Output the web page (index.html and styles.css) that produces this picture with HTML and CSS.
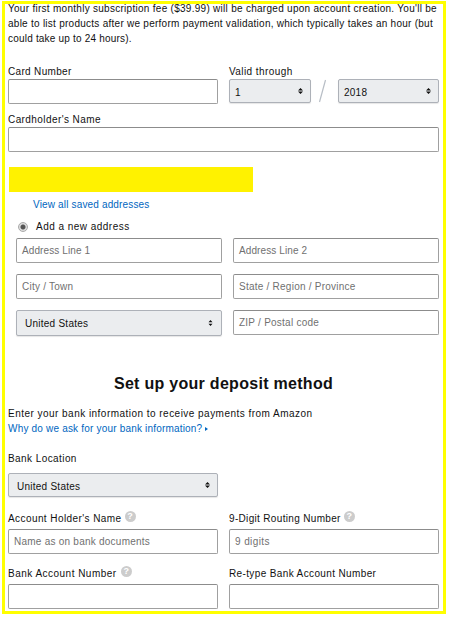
FILE: index.html
```html
<!DOCTYPE html>
<html lang="en">
<head>
<meta charset="utf-8">
<title>Set up your deposit method</title>
<link rel="stylesheet" href="styles.css">
</head>
<body>
<main class="frame">
  <p class="notice">Your first monthly subscription fee ($39.99) will be charged upon account creation. You'll be<br><span class="second">able to list products after we perform payment validation, which typically takes an hour (but</span><br><span class="third">could take up to 24 hours).</span></p>
  <section class="pair card">
    <div class="field"><label class="label snug">Card Number</label><div class="input"></div></div>
    <div class="field"><label class="label">Valid through</label>
      <div class="expiry">
        <div class="select month"><span>1</span><svg class="arrows" viewBox="0 0 5 6"><path d="M2.5 0 5 2.4H0zM0 3.6h5L2.5 6z"/></svg></div>
        <svg class="slash" viewBox="0 0 9 25"><path d="M7.5 1 1.5 23"/></svg>
        <div class="select year"><span>2018</span><svg class="arrows" viewBox="0 0 5 6"><path d="M2.5 0 5 2.4H0zM0 3.6h5L2.5 6z"/></svg></div>
      </div>
    </div>
  </section>
  <section class="field holder"><label class="label">Cardholder's Name</label><div class="input"></div></section>
  <div class="redacted"></div>
  <a class="saved">View all saved addresses</a>
  <div class="choice"><span class="radio"></span><span>Add a new address</span></div>
  <section class="address">
    <div class="input tight">Address Line 1</div><div class="input tight">Address Line 2</div>
    <div class="input">City / Town</div><div class="input">State / Region / Province</div>
    <div class="select country"><span>United States</span><svg class="arrows" viewBox="0 0 5 6"><path d="M2.5 0 4.5 2.2h-4zM.5 3.8h4L2.5 6z"/></svg></div><div class="input">ZIP / Postal code</div>
  </section>
  <h1 class="title">Set up your deposit method</h1>
  <p class="intro">Enter your bank information to receive payments from Amazon</p>
  <a class="why">Why do we ask for your bank information?<svg class="caret" viewBox="0 0 3 4"><path d="M0 0 3 2 0 4z"/></svg></a>
  <section class="location"><label class="label">Bank Location</label>
    <div class="select bank"><span>United States</span><svg class="arrows" viewBox="0 0 5 6"><path d="M2.5 0 5 2.4H0zM0 3.6h5L2.5 6z"/></svg></div>
  </section>
  <section class="pair account">
    <div class="field"><label class="label">Account Holder's Name<span class="help">?</span></label><div class="input">Name as on bank documents</div></div>
    <div class="field"><label class="label snug">9-Digit Routing Number<span class="help">?</span></label><div class="input digits">9 digits</div></div>
    <div class="field"><label class="label loose">Bank Account Number<span class="help">?</span></label><div class="input"></div></div>
    <div class="field"><label class="label retype">Re-type Bank Account Number</label><div class="input"></div></div>
  </section>
</main>
</body>
</html>
```
FILE: styles.css
```css
* { box-sizing: border-box; }
body { margin: 0; background: #fff; color: #111; font: 10px/15px "Liberation Sans", Arial, sans-serif; letter-spacing: 0.47px; }
.frame { width: 444px; height: 613px; margin: 1px 0 0 2px; border: 3px solid #ff0; padding: 0 4px 0 3px; }
.notice { margin: -3px 0 0; white-space: nowrap; letter-spacing: 0.28px; }
.second { letter-spacing: 0.26px; }
.third { letter-spacing: 0.2px; }
.pair { display: grid; grid-template-columns: 210px 210px; column-gap: 11px; }
.card { margin-top: 18px; }
.label { display: flex; align-items: center; height: 15px; white-space: nowrap; letter-spacing: 0.42px; }
.snug { letter-spacing: 0.33px; }
.loose { letter-spacing: 0.48px; }
.retype { letter-spacing: 0.37px; }
.input { height: 25px; border: 1px solid #a0a0a0; border-top-color: #8c8c8c; border-radius: 2px; background: #fff; color: #707070; padding: 0 5px; line-height: 24px; white-space: nowrap; letter-spacing: 0.24px; }
.tight { letter-spacing: 0.1px; }
.digits { letter-spacing: 0.4px; }
.select { display: flex; align-items: center; justify-content: space-between; height: 24px; border: 1px solid #adb1b8; border-radius: 2px; background: #ebedef; box-shadow: 0 1px 1px rgba(0, 0, 0, .1); padding: 2px 7px 0 5px; letter-spacing: 0.25px; }
.arrows { width: 5px; height: 6px; fill: #111; margin-bottom: 2px; }
.expiry { display: flex; }
.month { width: 82px; }
.year { width: 101px; }
.slash { width: 9px; height: 25px; margin: 0 11px 0 7px; fill: none; stroke: #b8bec6; stroke-width: 1.2; }
.holder { margin-top: 8px; }
.redacted { width: 244px; height: 25px; margin: 15px 0 0 1px; background: #fff200; }
.saved { display: block; width: max-content; margin: 5px 0 0 25px; color: #0066c0; letter-spacing: 0.16px; }
.choice { display: flex; align-items: center; gap: 8px; height: 15px; margin: 7px 0 0 10px; }
.radio { width: 10px; height: 10px; border: 1px solid #aaa; border-radius: 50%; background: radial-gradient(circle, #555 0 2px, #ddd 3px); }
.address { display: grid; grid-template-columns: 206px 206px; gap: 11px; margin: 4px 0 0 8px; }
.country { height: 26px; padding: 0 8px; }
.country .arrows { margin: 0; }
.title { margin: 37px 0 0; font-size: 16px; line-height: 22px; text-align: center; letter-spacing: 0.29px; }
.intro { margin: 11px 0 0; letter-spacing: 0.47px; }
.why { display: flex; align-items: center; color: #0066c0; letter-spacing: 0.19px; }
.caret { width: 3px; height: 4px; margin-left: 3px; fill: #0066c0; }
.location { margin-top: 15px; }
.bank { width: 210px; margin-top: 7px; padding-left: 8px; }
.account { margin-top: 14px; row-gap: 12px; }
.account .label { height: 18px; padding-bottom: 3px; }
.help { width: 11px; height: 11px; margin: -5px 0 0 3px; border-radius: 50%; background: #ccc; color: #fff; font-size: 9px; line-height: 11px; font-weight: bold; text-align: center; letter-spacing: 0; }
.loose .help { margin-left: 4px; }
```
